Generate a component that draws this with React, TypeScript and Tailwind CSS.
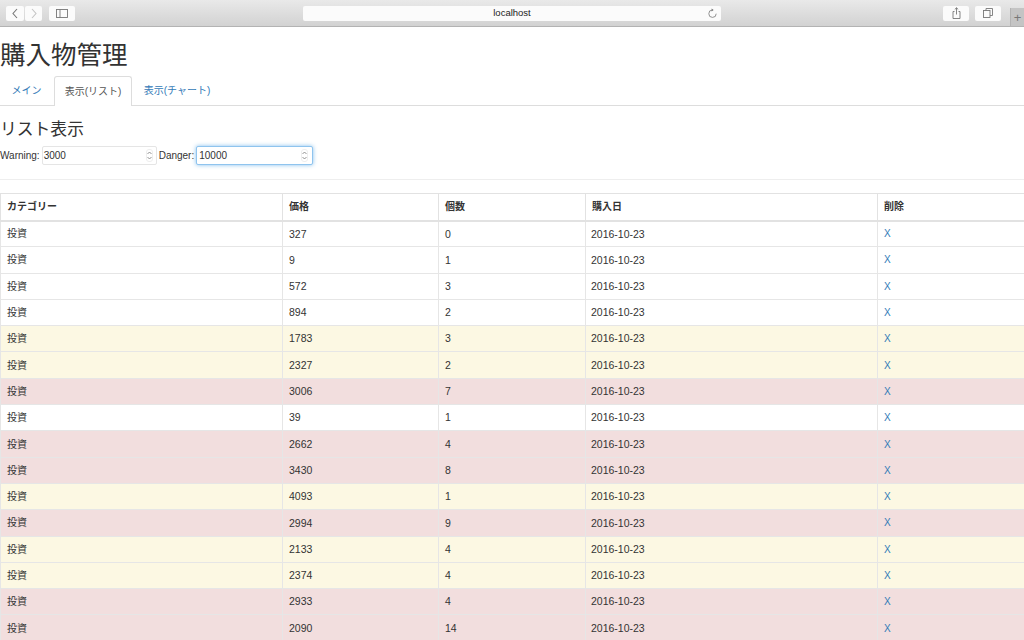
const FONT = "font-['Liberation_Sans','Noto_Sans_CJK_JP',sans-serif]";

const rows: [number, number, string][] = [
  [327, 0, ""],
  [9, 1, ""],
  [572, 3, ""],
  [894, 2, ""],
  [1783, 3, "w"],
  [2327, 2, "w"],
  [3006, 7, "d"],
  [39, 1, ""],
  [2662, 4, "d"],
  [3430, 8, "d"],
  [4093, 1, "w"],
  [2994, 9, "d"],
  [2133, 4, "w"],
  [2374, 4, "w"],
  [2933, 4, "d"],
  [2090, 14, "d"],
];

function ToolButton({ className, children }: { className: string; children: React.ReactNode }) {
  return (
    <div className={`h-[15px] rounded-[2px] bg-[#fbfbfb] flex items-center justify-center ${className}`}>
      {children}
    </div>
  );
}

function Spinner() {
  return (
    <div className="w-[7px] h-[13px] rounded-[3px] border border-[#eee] flex items-center justify-center">
      <svg width="7" height="11" viewBox="0 0 7 11" fill="none" stroke="#777" strokeWidth="0.8" className="shrink-0">
        <path d="M1.5 4 L3.5 2 L5.5 4" />
        <path d="M1.5 7 L3.5 9 L5.5 7" />
      </svg>
    </div>
  );
}

function Toolbar() {
  return (
    <div className="h-[27px] bg-gradient-to-b from-[#e9e9e9] to-[#d2d2d2] border-b border-[#b3b3b3] flex items-center pl-[6px] relative">
      <ToolButton className="w-[18px]">
        <svg width="8" height="11" viewBox="0 0 8 11" fill="none" stroke="#777" strokeWidth="1.1">
          <path d="M6 1 L2 5.5 L6 10" />
        </svg>
      </ToolButton>
      <ToolButton className="w-[17px] ml-[1px]">
        <svg width="8" height="11" viewBox="0 0 8 11" fill="none" stroke="#c4c4c4" strokeWidth="1.1">
          <path d="M2 1 L6 5.5 L2 10" />
        </svg>
      </ToolButton>
      <ToolButton className="w-[26px] ml-[7px]">
        <svg width="12" height="9" viewBox="0 0 12 9" fill="none" stroke="#777" strokeWidth="0.9">
          <rect x="0.5" y="0.5" width="11" height="8" />
          <path d="M4 0.5 V8.5" />
        </svg>
      </ToolButton>
      <ToolButton className="w-[418px] ml-[228px] relative">
        <span className="text-[9.5px] text-[#222] pt-px">localhost</span>
        <svg className="absolute right-[3px] top-[2px]" width="11" height="11" viewBox="0 0 11 11" fill="none" stroke="#777" strokeWidth="0.8">
          <path d="M5.5 2 A3.7 3.7 0 1 0 9.2 5.7" />
          <path d="M4.6 0.6 L6.6 2 L4.6 3.4" fill="#777" stroke="none" />
        </svg>
      </ToolButton>
      <ToolButton className="w-[26px] ml-[222px]">
        <svg width="9" height="12" viewBox="0 0 9 12" fill="none" stroke="#777" strokeWidth="0.9">
          <path d="M2.5 4.5 H1 V11.5 H8 V4.5 H6.5" />
          <path d="M4.5 7.5 V0.8 M2.8 2.4 L4.5 0.8 L6.2 2.4" />
        </svg>
      </ToolButton>
      <ToolButton className="w-[26px] ml-[6px]">
        <svg width="10" height="10" viewBox="0 0 10 10" fill="none" stroke="#777" strokeWidth="0.9">
          <rect x="0.5" y="2.5" width="6.5" height="7" />
          <path d="M3 2.5 V0.5 H9.5 V7.5 H7" />
        </svg>
      </ToolButton>
      <div className="absolute right-0 bottom-0 w-[14px] h-[18px] bg-[#c4c4c4] border-l border-[#b3b3b3] flex items-center justify-center text-[13px] leading-none text-[#777]">
        +
      </div>
    </div>
  );
}

function NumberField({ value, className }: { value: string; className: string }) {
  return (
    <div className={`h-[19px] rounded-[2px] bg-white flex items-center justify-between ${className}`}>
      <span>{value}</span>
      <Spinner />
    </div>
  );
}

export default function App() {
  return (
    <div className={`${FONT} h-[640px] overflow-hidden bg-white text-[#333] text-[10.5px]`}>
      <Toolbar />
      <h1 className="text-[25.5px] leading-[30px] mt-[13px]">購入物管理</h1>
      <div className="flex mt-[6px] h-[30px] border-b border-[#ddd] text-[10px] text-[#337ab7]">
        <div className="w-[54px] flex items-center justify-center pr-px">メイン</div>
        <div className="w-[78px] h-[30px] flex items-center justify-center text-[#555] bg-white border border-b-0 border-[#ddd] rounded-t-[3px]">
          表示(リスト)
        </div>
        <div className="w-[90px] flex items-center justify-center">表示(チャート)</div>
      </div>
      <h3 className="text-[16.8px] leading-[20px] mt-[14px]">リスト表示</h3>
      <div className="flex items-center mt-[5px] h-[20px] text-[10px]">
        <span>Warning:</span>
        <NumberField value="3000" className="w-[115px] ml-[2px] pl-[1px] pr-[3px] border border-[#e5e5e5]" />
        <span className="ml-[2px]">Danger:</span>
        <NumberField
          value="10000"
          className="w-[117px] ml-[2px] pl-[2px] pr-[4px] border border-[#8fc4ee] shadow-[0_0_4px_rgba(102,175,233,0.8)]"
        />
      </div>
      <div className="h-px bg-[#eee] mt-[14px]" />
      <table className="mt-[13px] w-[1024px] table-fixed border-collapse">
        <colgroup>
          <col className="w-[282px]" />
          <col className="w-[156px]" />
          <col className="w-[147px]" />
          <col className="w-[292px]" />
          <col className="w-[147px]" />
        </colgroup>
        <thead>
          <tr className="h-[27px] font-bold text-left text-[10px]">
            {["カテゴリー", "価格", "個数", "購入日", "削除"].map((h) => (
              <th key={h} className="border border-[#e2e2e2] border-b-2 pl-[6px] pr-[5px] py-0 font-bold">
                {h}
              </th>
            ))}
          </tr>
        </thead>
        <tbody>
          {rows.map(([price, count, level], i) => (
            <tr
              key={i}
              className={`h-[26.3px] ${level === "w" ? "bg-[#fcf8e3]" : level === "d" ? "bg-[#f2dede]" : "bg-white"}`}
            >
              <td className="border border-[#e6e6e6] pl-[6px] py-0 text-[10px]">投資</td>
              <td className="border border-[#e6e6e6] pl-[6px] pt-px pb-0">{price}</td>
              <td className="border border-[#e6e6e6] pl-[6px] pt-px pb-0">{count}</td>
              <td className="border border-[#e6e6e6] pl-[5px] pt-px pb-0">2016-10-23</td>
              <td className="border border-[#e6e6e6] pl-[6px] py-0 text-[10px] text-[#337ab7]">X</td>
            </tr>
          ))}
        </tbody>
      </table>
    </div>
  );
}
